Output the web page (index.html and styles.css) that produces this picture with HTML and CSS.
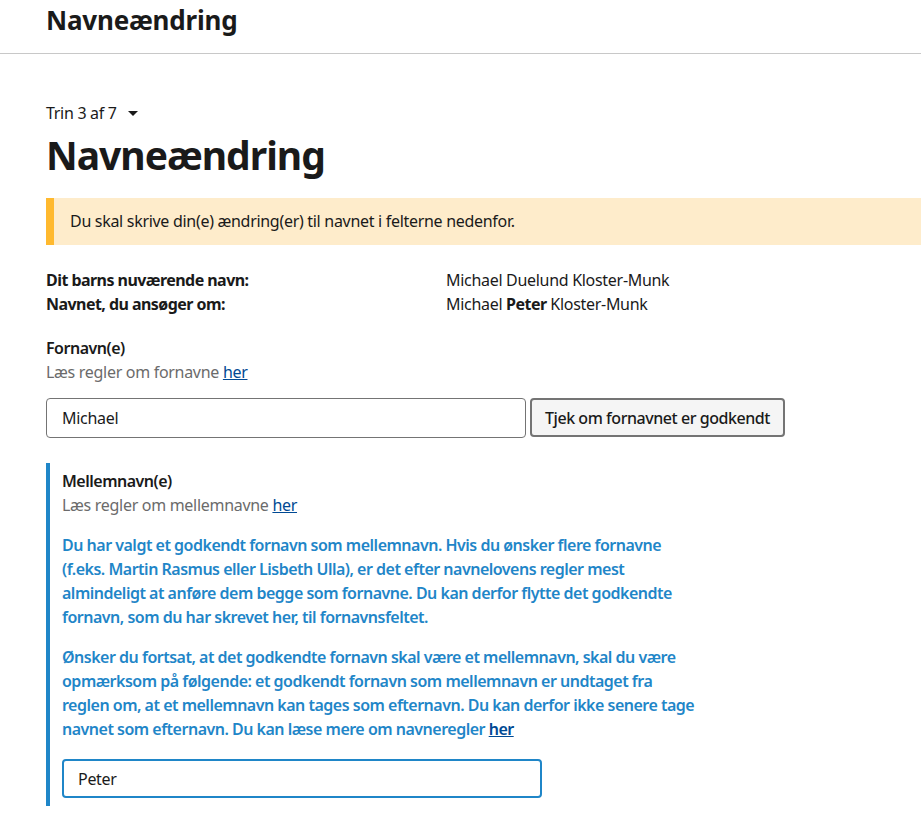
FILE: index.html
```html
<!DOCTYPE html>
<html lang="da">
<head>
  <meta charset="UTF-8" />
  <meta name="viewport" content="width=device-width, initial-scale=1.0"/>
  <title>Navneændring</title>
  <link rel="stylesheet" href="styles.css">
</head>
<body>
  <header class="site-header">
    <div class="site-title">Navneændring</div>
  </header>

  <main class="content">
    <div class="step">Trin 3 af 7 <span class="caret"></span></div>
    <h1>Navneændring</h1>

    <div class="alert">Du skal skrive din(e) ændring(er) til navnet i felterne nedenfor.</div>

    <dl class="summary">
      <dt>Dit barns nuværende navn:</dt>
      <dd>Michael Duelund Kloster-Munk</dd>
      <dt>Navnet, du ansøger om:</dt>
      <dd>Michael <strong>Peter</strong> Kloster-Munk</dd>
    </dl>

    <div class="field">
      <label class="label" for="fornavn">Fornavn(e)</label>
      <div class="hint">Læs regler om fornavne <a href="#">her</a></div>
      <div class="input-row">
        <input class="input" id="fornavn" type="text" value="Michael">
        <button class="button" type="button">Tjek om fornavnet er godkendt</button>
      </div>
    </div>

    <div class="field field-info">
      <label class="label" for="mellemnavn">Mellemnavn(e)</label>
      <div class="hint">Læs regler om mellemnavne <a href="#">her</a></div>
      <p class="info-text">Du har valgt et godkendt fornavn som mellemnavn. Hvis du ønsker flere fornavne (f.eks. Martin Rasmus eller Lisbeth Ulla), er det efter navnelovens regler mest almindeligt at anføre dem begge som fornavne. Du kan derfor flytte det godkendte fornavn, som du har skrevet her, til fornavnsfeltet.</p>
      <p class="info-text">Ønsker du fortsat, at det godkendte fornavn skal være et mellemnavn, skal du være opmærksom på følgende: et godkendt fornavn som mellemnavn er undtaget fra reglen om, at et mellemnavn kan tages som efternavn. Du kan derfor ikke senere tage navnet som efternavn. Du kan læse mere om navneregler <a href="#">her</a></p>
      <input class="input input-active" id="mellemnavn" type="text" value="Peter">
    </div>
  </main>
</body>
</html>
```

FILE: styles.css
```css
body {
  margin: 0;
  font-family: "Noto Sans", "Open Sans", sans-serif;
  font-size: 16px;
  line-height: 24px;
  letter-spacing: -0.3px;
  color: #1a1a1a;
  background: #fff;
}

.site-header {
  border-bottom: 1px solid #c8c8c8;
  padding: 0 46px;
  height: 53px;
}

.site-title {
  font-size: 26px;
  font-weight: 700;
  line-height: 40px;
  letter-spacing: -0.2px;
}

.content {
  padding: 47px 0 0 46px;
}

.step {
  display: flex;
  align-items: center;
}

.caret {
  display: inline-block;
  margin-left: 11px;
  border-left: 5px solid transparent;
  border-right: 5px solid transparent;
  border-top: 5px solid #1a1a1a;
}

h1 {
  font-size: 39px;
  line-height: 48px;
  font-weight: 700;
  letter-spacing: -1px;
  margin: 6px 0 19px;
}

.alert {
  background: #feeccb;
  border-left: 8px solid #ffb92e;
  padding: 12px 16px;
  line-height: 23px;
}

.summary {
  display: grid;
  grid-template-columns: 400px 1fr;
  margin: 23px 0 0;
}

.summary dt {
  font-weight: 700;
  letter-spacing: -0.55px;
}

.summary dd {
  margin: 0;
}

.summary strong {
  letter-spacing: -0.55px;
}

.field {
  margin-top: 20px;
}

.label {
  display: block;
  font-weight: 600;
  letter-spacing: -0.5px;
}

.hint {
  color: #6b6b6b;
}

.hint a, .info-text a {
  color: #004993;
}

.input-row {
  display: flex;
  gap: 4px;
  margin-top: 14px;
}

.input {
  box-sizing: border-box;
  width: 480px;
  height: 40px;
  border: 1px solid #747474;
  border-radius: 4px;
  padding: 0 15px;
  font: inherit;
  letter-spacing: inherit;
  color: #1a1a1a;
}

.button {
  box-sizing: border-box;
  height: 39px;
  padding: 0 13px;
  background: #f5f5f5;
  border: 2px solid #747474;
  border-radius: 4px;
  font: inherit;
  font-weight: 500;
  letter-spacing: -0.45px;
  color: #1a1a1a;
}

.field-info {
  margin-top: 25px;
  border-left: 4px solid #1f86c8;
  padding: 6px 0 8px 12px;
}

.field-info .hint {
  margin-bottom: 16px;
}

.info-text {
  color: #1f86c8;
  font-weight: 600;
  letter-spacing: -0.5px;
  max-width: 640px;
  margin: 0 0 16px;
}

.input-active {
  display: block;
  margin-top: 18px;
  border: 2px solid #1f86c8;
  height: 39px;
  padding: 0 14px;
}
```
